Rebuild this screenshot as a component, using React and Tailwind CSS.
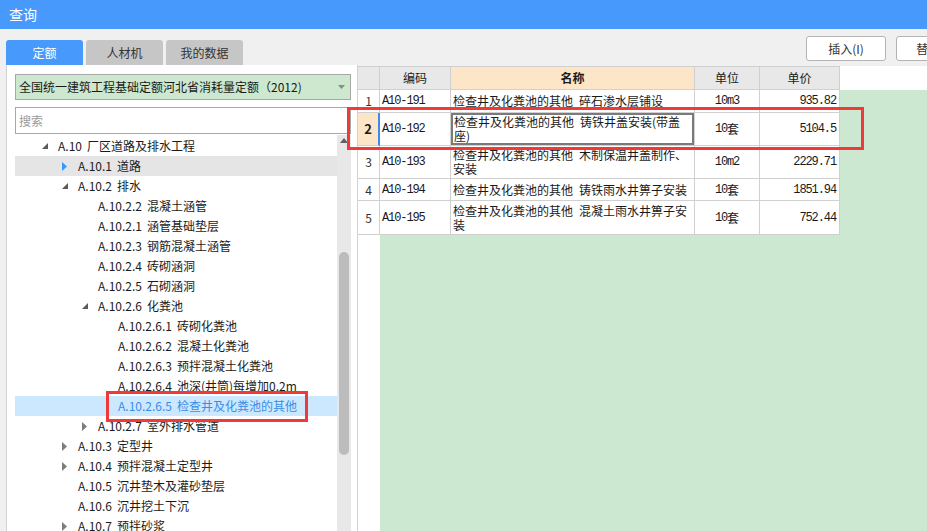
import React from "react";

const tree = [
  { lv: 0, t: "A.10 厂区道路及排水工程", a: "open" },
  { lv: 1, t: "A.10.1 道路", a: "closed", hover: true },
  { lv: 1, t: "A.10.2 排水", a: "open" },
  { lv: 2, t: "A.10.2.2 混凝土涵管" },
  { lv: 2, t: "A.10.2.1 涵管基础垫层" },
  { lv: 2, t: "A.10.2.3 钢筋混凝土涵管" },
  { lv: 2, t: "A.10.2.4 砖砌涵洞" },
  { lv: 2, t: "A.10.2.5 石砌涵洞" },
  { lv: 2, t: "A.10.2.6 化粪池", a: "open" },
  { lv: 3, t: "A.10.2.6.1 砖砌化粪池" },
  { lv: 3, t: "A.10.2.6.2 混凝土化粪池" },
  { lv: 3, t: "A.10.2.6.3 预拌混凝土化粪池" },
  { lv: 3, t: "A.10.2.6.4 池深(井筒)每增加0.2m" },
  { lv: 3, t: "A.10.2.6.5 检查井及化粪池的其他", sel: true },
  { lv: 2, t: "A.10.2.7 室外排水管道", a: "closed" },
  { lv: 1, t: "A.10.3 定型井", a: "closed" },
  { lv: 1, t: "A.10.4 预拌混凝土定型井", a: "closed" },
  { lv: 1, t: "A.10.5 沉井垫木及灌砂垫层" },
  { lv: 1, t: "A.10.6 沉井挖土下沉" },
  { lv: 1, t: "A.10.7 预拌砂浆", a: "closed" },
];

const indent = ["pl-[27px]", "pl-[47px]", "pl-[67px]", "pl-[87px]"];

const rows = [
  { n: 1, code: "A10-191", name: [["检查井及化粪池的其他", "碎石渗水层铺设"]], num: "10", suf: "m3", price: "935.82", h: "h-[23px]" },
  { n: 2, code: "A10-192", name: [["检查井及化粪池的其他", "铸铁井盖安装(带盖"], ["座)"]], num: "10", suf: "套", price: "5104.5", h: "h-[33px]", sel: true },
  { n: 3, code: "A10-193", name: [["检查井及化粪池的其他", "木制保温井盖制作、"], ["安装"]], num: "10", suf: "m2", price: "2229.71", h: "h-[33px]" },
  { n: 4, code: "A10-194", name: [["检查井及化粪池的其他", "铸铁雨水井箅子安装"]], num: "10", suf: "套", price: "1851.94", h: "h-[22px]" },
  { n: 5, code: "A10-195", name: [["检查井及化粪池的其他", "混凝土雨水井箅子安"], ["装"]], num: "10", suf: "套", price: "752.44", h: "h-[34px]" },
];

const mono = "font-['Liberation_Mono','Noto_Sans_CJK_SC',monospace] text-[12px] tracking-[-1.1px]";

const Arrow = ({ type, blue }) => {
  if (type === "open")
    return (
      <svg width="6" height="6" viewBox="0 0 6 6">
        <polygon points="6,0 6,6 0,6" fill="#5a5a5a" />
      </svg>
    );
  if (type === "closed")
    return (
      <svg width="5" height="9" viewBox="0 0 5 9">
        <polygon points="0,0 5,4.5 0,9" fill={blue ? "#3c98f5" : "#7d7d7d"} />
      </svg>
    );
  return null;
};

export default function App() {
  return (
    <div className="relative w-[927px] h-[531px] overflow-hidden flex flex-col bg-[#f0f0f0] font-['Noto_Sans_CJK_SC',sans-serif] text-[12px] text-[#1a1a1a]">
      {/* title */}
      <div className="h-[29px] shrink-0 bg-[#4799fb] flex items-center pl-[9px] text-white text-[14px]">查询</div>

      <div className="flex-1 flex min-h-0">
        {/* left pane */}
        <div className="w-[358px] shrink-0 pl-[6px] pt-[11px] flex flex-col">
          <div className="flex gap-[3px] h-[25px] shrink-0">
            <div className="w-[77px] rounded-t-[3px] bg-[#4799fb] text-white flex items-center justify-center">定额</div>
            <div className="w-[77px] rounded-t-[3px] bg-[#c6c6c6] text-[#333] flex items-center justify-center">人材机</div>
            <div className="w-[77px] rounded-t-[3px] bg-[#c6c6c6] text-[#333] flex items-center justify-center">我的数据</div>
          </div>
          <div className="w-[352px] flex-1 min-h-0 bg-white border-l border-r border-[#d2d2d2] pl-[8px] pr-[6px] pt-[9px] flex flex-col">
            <div className="h-[26px] shrink-0 bg-[#cde8cf] border border-[#a8a8a8] flex items-center pl-[3px] pr-[5px]">
              <span className="flex-1">全国统一建筑工程基础定额河北省消耗量定额（2012)</span>
              <svg width="7" height="4" viewBox="0 0 7 4">
                <polygon points="0,0 7,0 3.5,4" fill="#8a8a8a" />
              </svg>
            </div>
            <div className="mt-[7px] h-[27px] shrink-0 bg-white border border-[#a8a8a8] flex items-center pl-[3px] text-[#9a9a9a]">搜索</div>
            <div className="mt-[1px] flex-1 min-h-0 flex">
              <div className="w-[322px] pt-[1px] flex flex-col">
                {tree.map((r) => {
                  const i = r.t.indexOf(" ");
                  return (
                    <div
                      key={r.t}
                      className={`h-[20px] shrink-0 flex items-center ${indent[r.lv]} ${r.hover ? "bg-[#e5e5e5]" : ""} ${r.sel ? "bg-[#cce8ff] text-[#3a8de6]" : ""}`}
                    >
                      <div className="w-[16px] flex items-center">
                        <Arrow type={r.a} blue={r.hover} />
                      </div>
                      <span className="whitespace-nowrap">{r.t.slice(0, i)}</span>
                      <span className="whitespace-nowrap ml-[5px]">{r.t.slice(i + 1)}</span>
                    </div>
                  );
                })}
              </div>
              <div className="w-[14px] bg-[#e8e8e8] flex flex-col items-center pt-[3px]">
                <svg width="8" height="5" viewBox="0 0 8 5">
                  <polygon points="4,0 8,5 0,5" fill="#606060" />
                </svg>
                <div className="mt-[109px] w-[10px] h-[203px] rounded-full bg-[#bcbcbc]" />
              </div>
            </div>
          </div>
        </div>

        {/* right pane */}
        <div className="flex-1 min-w-0 flex flex-col">
          <div className="h-[37px] shrink-0 flex items-start pt-[7px] pl-[448px] gap-[10px] overflow-hidden">
            <div className="w-[80px] h-[25px] shrink-0 bg-white border border-[#b4b4b4] rounded-[3px] flex items-center justify-center text-[#333]">插入(I)</div>
            <div className="w-[80px] h-[25px] shrink-0 bg-white border border-[#b4b4b4] rounded-[3px] flex items-center justify-center text-[#333]">替换(R)</div>
          </div>
          <div className="flex-1 min-h-0 flex bg-[#cde8d1]">
            {/* number column */}
            <div className="w-[22px] shrink-0 bg-white flex flex-col">
              <div className="h-[24px] shrink-0 bg-[#e8e8e8] border-t border-b border-r border-[#d0d0d0]" />
              {rows.map((r) => (
                <div
                  key={r.n}
                  className={`${r.h} shrink-0 border-b border-[#d0d0d0] flex items-center justify-center ${r.sel ? "bg-[#fde5c8] font-bold text-[13px] border-r-2 border-r-[#3c8cf0]" : "border-r text-[#333]"}`}
                >
                  {r.n}
                </div>
              ))}
            </div>
            <div className="flex-1 flex flex-col">
              <div className="h-[24px] shrink-0 flex bg-white">
                <div className="w-[71px] bg-[#e8e8e8] border-t border-b border-r border-[#d0d0d0] flex items-center justify-center">编码</div>
                <div className="w-[244px] bg-[#fde5c8] border-t border-b border-r border-[#d0d0d0] flex items-center justify-center font-bold">名称</div>
                <div className="w-[65px] bg-[#e8e8e8] border-t border-b border-r border-[#d0d0d0] flex items-center justify-center">单位</div>
                <div className="w-[80px] bg-[#e8e8e8] border-t border-b border-r border-[#d0d0d0] flex items-center justify-center">单价</div>
              </div>
              {rows.map((r) => (
                <div key={r.n} className={`${r.h} shrink-0 flex`}>
                  <div className={`w-[71px] bg-white border-b border-r border-[#d0d0d0] flex items-center pl-[2px] ${mono}`}>{r.code}</div>
                  <div className="w-[244px] bg-white border-b border-r border-[#d0d0d0] flex">
                    <div className={`flex-1 flex flex-col justify-center pl-[1px] leading-[14px] whitespace-nowrap ${r.sel ? "border-2 border-[#7a7a7a]" : "pl-[2px]"}`}>
                      {r.name.map((l) => (
                        <div key={l.join()} className="flex">
                          <span>{l[0]}</span>
                          {l[1] && <span className="ml-[6px]">{l[1]}</span>}
                        </div>
                      ))}
                    </div>
                  </div>
                  <div className="w-[65px] bg-white border-b border-r border-[#d0d0d0] flex items-center justify-center">
                    <span className={mono}>{r.num}</span>
                    <span className={r.suf === "套" ? "" : mono}>{r.suf}</span>
                  </div>
                  <div className={`w-[80px] bg-white border-b border-r border-[#d0d0d0] flex items-center justify-end pr-[3px] ${mono}`}>{r.price}</div>
                </div>
              ))}
            </div>
          </div>
        </div>
      </div>

      {/* red annotation boxes */}
      <div className="absolute left-[347px] top-[107px] w-[517px] h-[43px] border-[3px] border-[#f03a3a]" />
      <div className="absolute left-[106px] top-[391px] w-[202px] h-[31px] border-[3px] border-[#f03a3a]" />
    </div>
  );
}
